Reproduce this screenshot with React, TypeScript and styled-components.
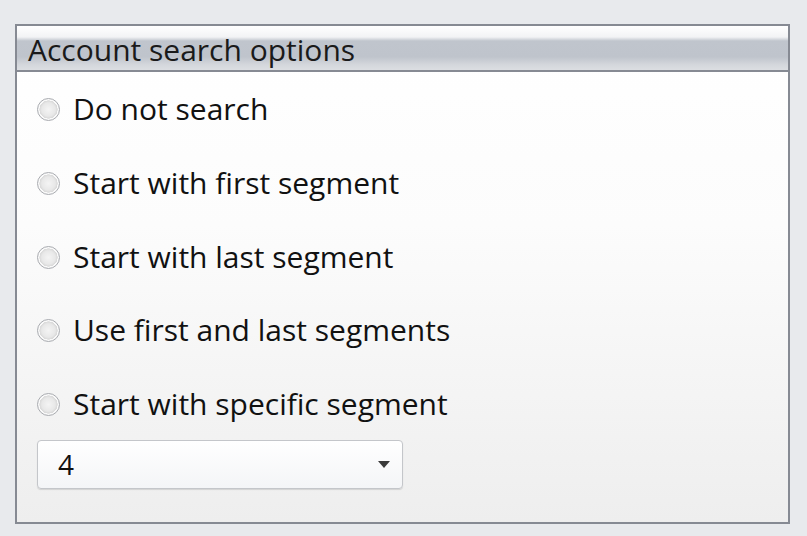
import React from "react";
import styled, { createGlobalStyle } from "styled-components";

const Global = createGlobalStyle`
  html, body { margin: 0; padding: 0; background: #e8eaed; }
  body { font-family: "Open Sans", "Noto Sans", sans-serif; }
  * { box-sizing: border-box; }
`;

const Page = styled.div`
  width: 807px;
  height: 536px;
  padding: 24px 17px 12px 15px;
  background: #e8eaed;
`;

const Panel = styled.section`
  height: 100%;
  border: 2px solid #868a93;
  display: flex;
  flex-direction: column;
  background: linear-gradient(#ffffff 0%, #fcfcfc 40%, #eeeeee 100%);
`;

const Header = styled.div`
  height: 46px;
  border-bottom: 2px solid #868a93;
  background: linear-gradient(
    #ffffff 0%,
    #f2f3f5 25%,
    #c0c5cd 34%,
    #bfc4cc 70%,
    #d4d7dc 88%,
    #dcdee2 100%
  );
  padding: 3px 0 0 11px;
  display: flex;
  align-items: center;
  font-size: 30px;
  color: #1a1a1a;
`;

const Body = styled.div`
  flex: 1;
  display: flex;
  flex-direction: column;
  padding: 18px 0 0 20px;
`;

const Option = styled.label`
  height: 73.8px;
  display: flex;
  align-items: flex-start;
  gap: 13px;
  font-size: 30px;
  color: #111;
  line-height: 38px;
`;

const Radio = styled.span`
  width: 23px;
  height: 23px;
  margin-top: 8px;
  border-radius: 50%;
  border: 1.5px solid #a9abb0;
  background: radial-gradient(circle at 50% 50%, #f4f4f4 0%, #e8e8e8 45%, #d8d8d8 60%, #fafafa 62%, #f0f0f0 100%);
  flex-shrink: 0;
`;

const Select = styled.div`
  width: 366px;
  height: 49px;
  margin-top: -19px;
  border: 1.5px solid #c4c6ca;
  border-radius: 4px;
  background: linear-gradient(#ffffff, #f4f5f7);
  box-shadow: 0 1px 1px rgba(0,0,0,0.12);
  display: flex;
  align-items: center;
  justify-content: space-between;
  padding: 0 12px 0 20px;
  font-size: 28px;
  color: #111;
`;

const Arrow = styled.span`
  width: 0;
  height: 0;
  border-left: 6px solid transparent;
  border-right: 6px solid transparent;
  border-top: 7px solid #3a3a3a;
`;

const options = [
  "Do not search",
  "Start with first segment",
  "Start with last segment",
  "Use first and last segments",
  "Start with specific segment",
];

export default function App() {
  return (
    <>
      <Global />
      <Page>
        <Panel>
          <Header>Account search options</Header>
          <Body>
            {options.map((o) => (
              <Option key={o}>
                <Radio />
                {o}
              </Option>
            ))}
            <Select>
              <span>4</span>
              <Arrow />
            </Select>
          </Body>
        </Panel>
      </Page>
    </>
  );
}
